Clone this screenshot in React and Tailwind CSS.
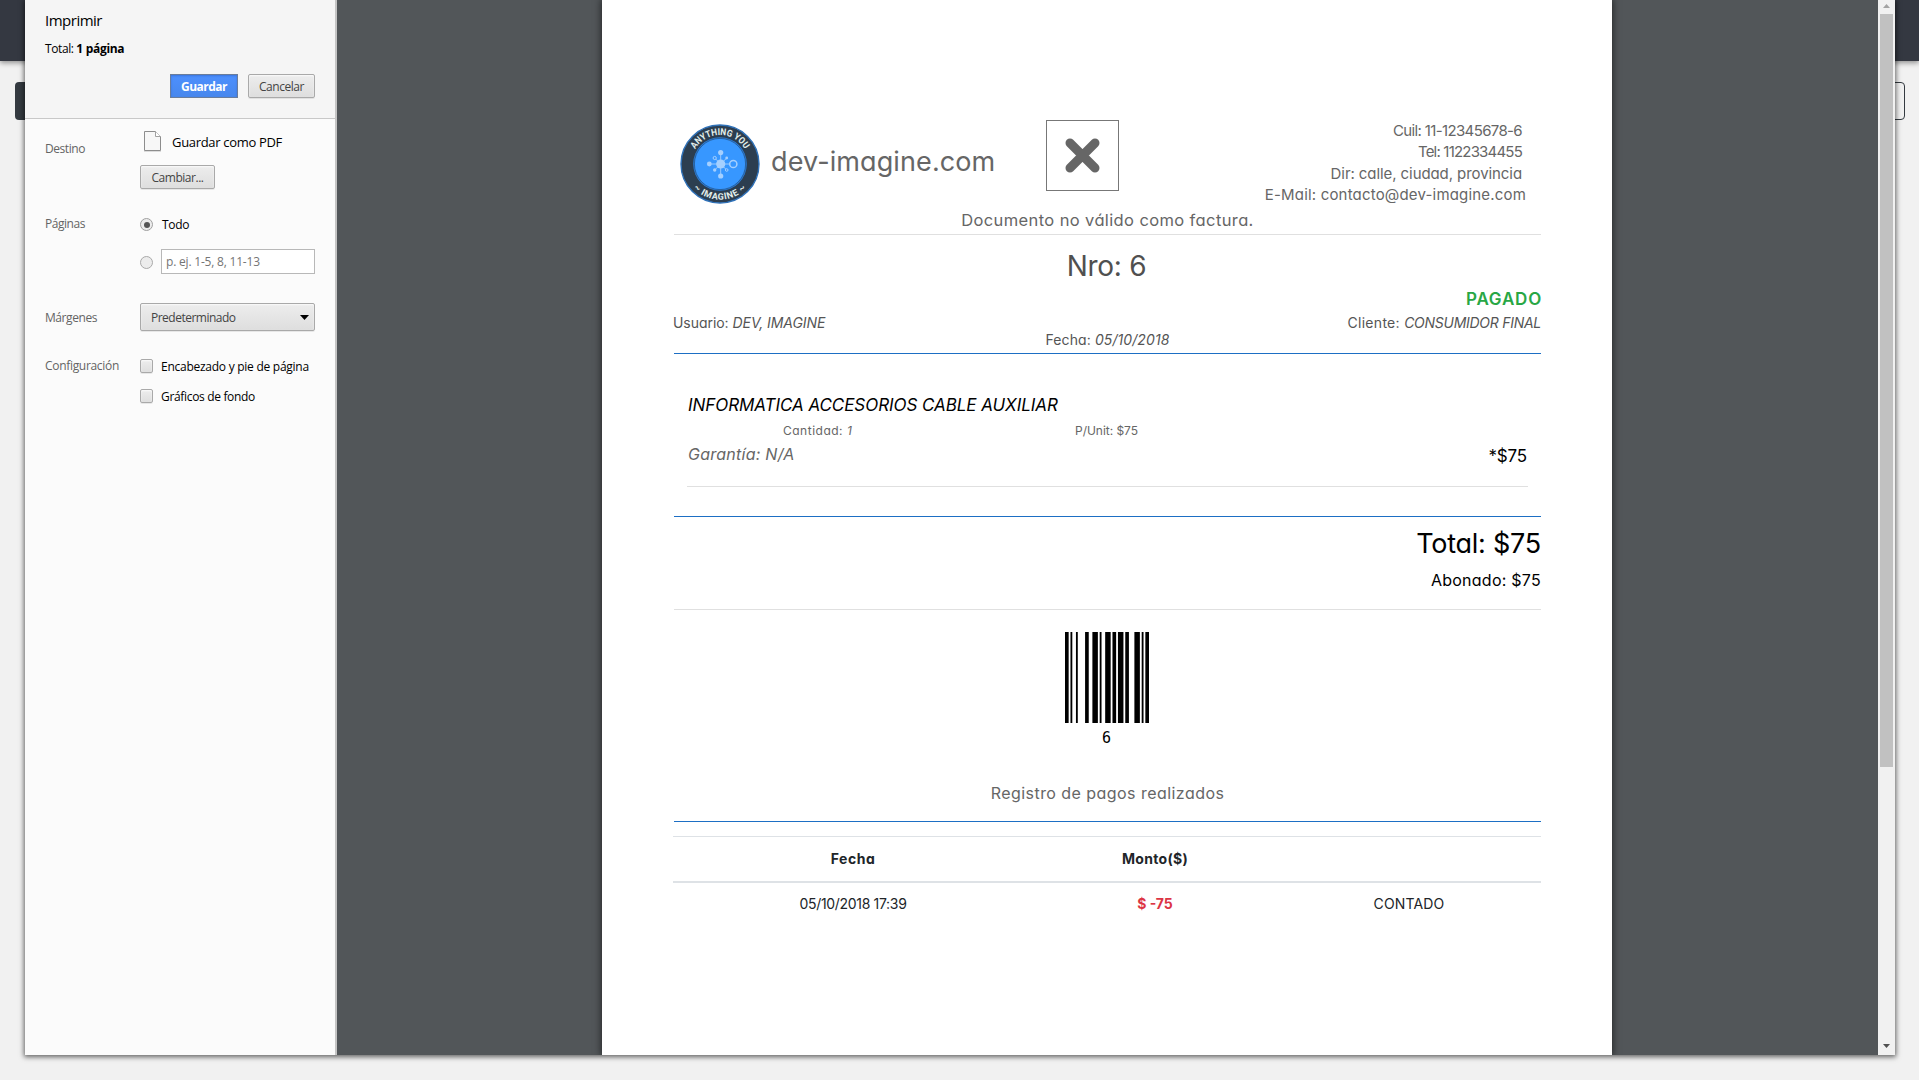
const BARCODE = [2, 1, 1, 2, 1, 4, 2, 2, 3, 1, 1, 2, 3, 1, 2, 1, 3, 1, 2, 3, 3, 1, 1, 1, 2];

function Barcode() {
  let x = 0;
  const bars = [];
  BARCODE.forEach((w, i) => {
    if (i % 2 === 0) bars.push(<rect key={i} x={x} y="0" width={w} height="10" />);
    x += w;
  });
  return (
    <svg className="w-[84px] h-[91px]" viewBox="0 0 46 10" preserveAspectRatio="none" fill="#000">
      {bars}
    </svg>
  );
}

function Logo() {
  return (
    <svg className="w-[80px] h-[80px] shrink-0" viewBox="-40 -40 80 80">
      <defs>
        <path id="arc-top" d="M -29 0 A 29 29 0 0 1 29 0" />
        <path id="arc-bottom" d="M -35.6 0 A 35.6 35.6 0 0 0 35.6 0" />
      </defs>
      <circle r="39" fill="#2c3e50" stroke="#2f71b8" strokeWidth="1.4" />
      <circle r="26.8" fill="#2a7bd6" />
      <circle r="25.6" fill="#3797ff" stroke="#24507f" strokeWidth="0.7" />
      <g fontFamily="Roboto, sans-serif" fontWeight="700" fill="#e3efec">
        <text fontSize="9.4" textLength="60" lengthAdjust="spacingAndGlyphs">
          <textPath href="#arc-top" startOffset="15.5" textLength="60" lengthAdjust="spacingAndGlyphs">ANYTHING YOU</textPath>
        </text>
        <text fontSize="9" textAnchor="middle" letterSpacing="0.6">
          <textPath href="#arc-bottom" startOffset="50%">~ IMAGINE ~</textPath>
        </text>
      </g>
      <g transform="translate(0.7 0)" fill="#a5d0ff" stroke="#a5d0ff">
        <path d="M0 -11V12M-11 0H9M-6 -6L6 6M-6 6L6 -6" strokeWidth="0.9" fill="none" />
        <g stroke="none">
          <circle r="4.6" />
          <circle cy="-11.4" r="2.6" />
          <circle cy="12" r="2.6" />
          <circle cx="-11.4" r="2.4" />
          <circle cx="6" cy="-6" r="1.4" />
          <circle cx="-6" cy="6" r="1.7" />
        </g>
        <g fill="#3797ff">
          <circle cx="12.6" r="3.6" strokeWidth="1.5" />
          <circle cx="-6" cy="-6" r="1.6" strokeWidth="1" />
          <circle cx="6" cy="6" r="1.3" strokeWidth="1" />
        </g>
      </g>
    </svg>
  );
}

const control = "border border-[#a9a9a9] bg-gradient-to-b from-[#ededed] to-[#dedede] rounded-[2px] text-[#444] shadow-[0_1px_0_rgba(0,0,0,0.08),inset_0_1px_2px_rgba(255,255,255,0.75)]";

function Check() {
  return <span className={"block w-[13px] h-[14px] shrink-0 " + control} />;
}

function Sidebar() {
  return (
    <aside className="w-[312px] shrink-0 bg-[#fbfbfb] border-r-2 border-[#c4c4c4] font-['Open_Sans',sans-serif] text-[12px] text-black flex flex-col">
      <header className="h-[119px] shrink-0 bg-[#f5f5f5] border-b border-[#c8c8c8] pl-[20px] pr-[20px]">
        <h1 className="mt-[8px] text-[15px] leading-[24px] tracking-[-0.5px]">Imprimir</h1>
        <p className="mt-[7px] leading-[20px]">
          <span className="tracking-[-0.4px]">Total: </span>
          <b className="tracking-[-0.3px]">1 página</b>
        </p>
        <div className="mt-[15px] flex justify-end gap-[10px]">
          <button className="w-[68px] h-[24px] pt-px leading-[21px] font-bold text-white tracking-[-0.5px] border border-[#6a7d9b] bg-gradient-to-b from-[#4d90fe] to-[#4787ed] shadow-[inset_0_1px_2px_rgba(40,90,190,0.5)]">Guardar</button>
          <button className={"w-[67px] h-[24px] pt-px leading-[21px] tracking-[-0.45px] " + control}>Cancelar</button>
        </div>
      </header>
      <div className="flex pl-[20px] text-[#646464] h-[98px]">
        <span className="w-[95px] pt-[20px] leading-[20px] tracking-[-0.44px]">Destino</span>
        <div className="pt-[12px]">
          <div className="flex pl-[4px] h-[34px]">
            <svg className="w-[17px] h-[21px]" viewBox="0 0 17 21">
              <path d="M0.5 0.5H11.5L16.5 5.5V19.5H0.5Z" fill="#f7f7f7" stroke="#8d8d8d" />
              <path d="M11.5 0.5V5.5H16.5" fill="#fff" stroke="#a0a0a0" />
              <path d="M0 20.5H17" stroke="#000" strokeOpacity="0.12" />
            </svg>
            <span className="ml-[11px] text-[13px] leading-[22px] text-black tracking-[-0.32px]">Guardar como PDF</span>
          </div>
          <button className={"block w-[75px] h-[24px] pt-px leading-[21px] tracking-[-0.46px] " + control}>Cambiar...</button>
        </div>
      </div>
      <div className="flex pl-[20px] text-[#646464] h-[86px]">
        <span className="w-[95px] -mt-[4px] leading-[22px] tracking-[-0.46px]">Páginas</span>
        <div className="text-black">
          <div className="flex items-center h-[15px]">
            <span className="grid place-items-center w-[13px] h-[13px] rounded-full border border-[#a0a0a0] bg-[#ececec]">
              <span className="block w-[6px] h-[6px] rounded-full bg-[#555]" />
            </span>
            <span className="ml-[9px] leading-[15px] tracking-[-0.3px]">Todo</span>
          </div>
          <div className="flex items-center mt-[17px] h-[25px]">
            <span className="block mt-[2px] w-[13px] h-[13px] rounded-full border border-[#a9a9a9] bg-[#ececec]" />
            <span className="ml-[8px] w-[154px] h-[25px] border border-[#b8b8b8] bg-white pl-[4px] leading-[23px] text-[#757575] tracking-[-0.2px]">p. ej. 1-5, 8, 11-13</span>
          </div>
        </div>
      </div>
      <div className="flex pl-[20px] text-[#646464] h-[55px]">
        <span className="w-[95px] pt-[5px] leading-[20px] tracking-[-0.43px]">Márgenes</span>
        <div className={"w-[175px] h-[28px] flex items-center justify-between pl-[10px] pr-[5px] " + control}>
          <span className="tracking-[-0.5px] leading-[20px] pt-px">Predeterminado</span>
          <svg className="w-[9px] h-[5px]" viewBox="0 0 9 5"><path d="M0 0H9L4.5 5Z" fill="#000" /></svg>
        </div>
      </div>
      <div className="flex pl-[20px] text-[#646464]">
        <span className="w-[95px] -mt-[2px] leading-[20px] tracking-[-0.31px]">Configuración</span>
        <div className="text-black pt-[1px]">
          <div className="flex items-center gap-[8px] h-[14px]">
            <Check />
            <span className="tracking-[-0.26px] leading-[14px] pt-[2px]">Encabezado y pie de página</span>
          </div>
          <div className="flex items-center gap-[8px] h-[14px] mt-[16px]">
            <Check />
            <span className="tracking-[-0.33px] leading-[14px] pt-[2px]">Gráficos de fondo</span>
          </div>
        </div>
      </div>
    </aside>
  );
}

function Invoice() {
  return (
    <article className="w-[1010px] h-[1055px] shrink-0 bg-white pt-[120px] pl-[72px] pr-[71px] shadow-[0_0_7px_1px_rgba(0,0,0,0.55)] font-['Inter',sans-serif] [font-feature-settings:'cv11'] text-[#666]">
      <header className="grid grid-cols-[372px_73px_1fr] h-[85px]">
        <div className="flex items-center pl-[6px] h-[83px] pt-[4px]">
          <Logo />
          <span className="ml-[11px] -mt-[3px] text-[27px] leading-[32px] tracking-[0.1px]">dev-imagine.com</span>
        </div>
        <div className="h-[71px] border border-[#777] grid place-items-center">
          <svg className="w-[36px] h-[36px]" viewBox="0 0 36 36">
            <path d="M5 5L30 30M30 5L5 30" stroke="#666" strokeWidth="9" strokeLinecap="round" />
          </svg>
        </div>
        <div className="text-right text-[15px] leading-[21.4px] pr-[19px] whitespace-nowrap">
          <p className="tracking-[-0.64px]">Cuil: 11-12345678-6</p>
          <p className="tracking-[-0.8px]">Tel: 1122334455</p>
          <p className="tracking-[-0.08px]">Dir: calle, ciudad, provincia</p>
          <p className="tracking-[0.18px] -mr-[4px]">E-Mail: contacto@dev-imagine.com</p>
        </div>
      </header>
      <p className="pt-px text-center leading-[28px] text-[16.5px] tracking-[0.38px] border-b border-[#e0e0e0]">Documento no válido como factura.</p>

      <section className="border-b border-[#1d6fc4] h-[119px] pt-[5px] text-[14px] text-[#555]">
        <h2 className="pr-[2px] text-center text-[28px] leading-[52px] tracking-[-0.3px] text-[#505050]">Nro: 6</h2>
        <p className="text-right text-[17px] leading-[14px] font-semibold tracking-[0.79px] -mr-px text-[#28a745]">PAGADO</p>
        <div className="flex justify-between mt-[9px] leading-[16px]">
          <p className="-ml-px tracking-[-0.05px]">Usuario: <i>DEV, IMAGINE</i></p>
          <p><span className="tracking-[0.3px]">Cliente: </span><i className="tracking-[-0.27px]">CONSUMIDOR FINAL</i></p>
        </div>
        <p className="text-center leading-[18px] tracking-[0.09px]">Fecha: <i>05/10/2018</i></p>
      </section>

      <section className="px-[13px] pt-[40px] h-[163px] border-b border-[#1d6fc4] flex flex-col">
        <h3 className="pl-[1px] italic text-black text-[17px] leading-[22px] tracking-[-0.06px]">INFORMATICA ACCESORIOS CABLE AUXILIAR</h3>
        <div className="mt-[4px] flex text-[12px] leading-[21px] pl-[96px]">
          <span className="w-[292px] tracking-[0.5px]">Cantidad: <i>1</i></span>
          <span className="tracking-[-0.03px]">P/Unit: $75</span>
        </div>
        <div className="flex justify-between h-[46px] border-b border-[#e0e0e0]">
          <i className="pl-[1px] text-[16px] leading-[26px] tracking-[0.25px]">Garantía: N/A</i>
          <span className="pr-px text-black text-[17px] leading-[30px] tracking-[-0.18px]">*$75</span>
        </div>
      </section>

      <section className="h-[93px] pt-[7px] border-b border-[#e0e0e0] text-right text-black">
        <p className="text-[27px] leading-[40px] tracking-[-0.25px]">Total: $75</p>
        <p className="text-[16px] leading-[32px] tracking-[0.25px]">Abonado: $75</p>
      </section>

      <figure className="flex flex-col items-center pt-[22px] pr-[2px]">
        <Barcode />
        <figcaption className="mt-[5px] font-['DejaVu_Sans_Mono',monospace] text-[15px] leading-[20px] text-black">6</figcaption>
      </figure>

      <p className="mt-[30px] h-[44px] border-b border-[#1d6fc4] text-center text-[16px] leading-[30px] tracking-[0.45px]">Registro de pagos realizados</p>
      <div className="mt-[14px] -ml-px border-t border-[#dee2e6] text-[14px] text-[#212529] text-center">
        <div className="grid grid-cols-[360px_244px_264px] h-[46px] leading-[44px] font-bold border-b-2 border-[#dee2e6]">
          <span className="tracking-[0.5px]">Fecha</span>
          <span className="tracking-[0.29px]">Monto($)</span>
          <span />
        </div>
        <div className="grid grid-cols-[360px_244px_264px] leading-[42px]">
          <span className="tracking-[-0.32px]">05/10/2018 17:39</span>
          <span className="font-bold text-[#dc3545]">$ -75</span>
          <span className="tracking-[0.17px]">CONTADO</span>
        </div>
      </div>
    </article>
  );
}

function Scrollbar() {
  return (
    <div className="w-[17px] shrink-0 bg-[#f1f1f1] flex flex-col items-center">
      <svg className="h-[14px] w-[7px] shrink-0" viewBox="0 0 7 14"><path d="M0 8L3.5 4L7 8Z" fill="#a3a3a3" /></svg>
      <span className="block w-[13px] h-[753px] bg-[#c1c1c1]" />
      <svg className="mt-auto h-[17px] w-[7px] shrink-0" viewBox="0 0 7 17"><path d="M0 6L3.5 10L7 6Z" fill="#505050" /></svg>
    </div>
  );
}

export default function App() {
  return (
    <div className="relative w-[1919px] h-[1080px] overflow-hidden bg-[#f1f1f1]">
      <div className="h-[61px] bg-[#343841] shadow-[0_2px_5px_rgba(0,0,0,0.4)]" />
      <div className="mt-[21px] ml-[15px] mr-[14px] flex justify-between">
        <span className="w-[60px] h-[38px] rounded-[4px] bg-[#343a40]" />
        <span className="w-[60px] h-[38px] rounded-[4px] border border-[#343a40]" />
      </div>
      <main className="absolute top-0 left-[25px] w-[1870px] h-[1055px] flex shadow-[0_1px_5px_1px_rgba(0,0,0,0.6)]">
        <Sidebar />
        <div className="flex-1 bg-[#525659] flex pl-[265px] overflow-hidden">
          <Invoice />
        </div>
        <Scrollbar />
      </main>
    </div>
  );
}
